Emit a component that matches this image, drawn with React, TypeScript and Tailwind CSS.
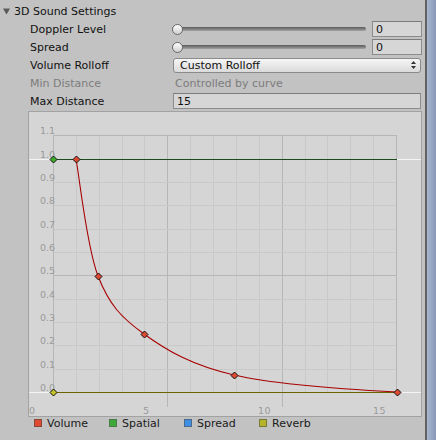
import React from "react";

const Y = (v: number) => 281 - v * 233.3;
const GX0 = 25;
const GX1 = 368;
const STEP = (GX1 - GX0) / 15;

type P = [number, number];
const pts: P[] = [
  [48, 48],
  [70, 165],
  [116, 223],
  [206, 264],
  [369, 281],
];

function catmull(p: P[]): string {
  let d = `M${p[0][0]},${p[0][1]}`;
  for (let i = 0; i < p.length - 1; i++) {
    const p0 = p[i - 1] || p[i];
    const p1 = p[i];
    const p2 = p[i + 1];
    const p3 = p[i + 2] || [p2[0] + (p2[0] - p1[0]), p2[1]];
    const c1: P = [p1[0] + (p2[0] - p0[0]) / 6, p1[1] + (p2[1] - p0[1]) / 6];
    const c2: P = [p2[0] - (p3[0] - p1[0]) / 6, p2[1] - (p3[1] - p1[1]) / 6];
    d += ` C${c1[0]},${c1[1]} ${c2[0]},${c2[1]} ${p2[0]},${p2[1]}`;
  }
  return d;
}

function Diamond({ x, y, fill }: { x: number; y: number; fill: string }) {
  const r = 3.5;
  return (
    <polygon
      points={`${x},${y - r} ${x + r},${y} ${x},${y + r} ${x - r},${y}`}
      fill={fill}
      stroke="#111"
      strokeWidth={1}
    />
  );
}

function Graph() {
  const vLines: React.ReactNode[] = [];
  for (let k = 1; k < 15; k++) {
    const x = Math.round(GX0 + k * STEP) + 0.5;
    const major = k % 5 === 0;
    vLines.push(
      <line
        key={"v" + k}
        x1={x}
        x2={x}
        y1={24.5}
        y2={major ? 296 : 281}
        stroke={major ? "#b6b6b6" : "#c9c9c9"}
        strokeWidth={1}
      />
    );
  }
  const hLines: React.ReactNode[] = [];
  for (let i = 1; i <= 9; i++) {
    const y = Math.round(Y(i / 10)) + 0.5;
    const major = i === 5;
    hLines.push(
      <line
        key={"h" + i}
        x1={GX0}
        x2={GX1}
        y1={y}
        y2={y}
        stroke={major ? "#b6b6b6" : "#c9c9c9"}
        strokeWidth={1}
      />
    );
  }
  const yLabels: React.ReactNode[] = [];
  for (let i = 0; i <= 11; i++) {
    const v = i / 10;
    yLabels.push(
      <text key={"yl" + i} x={12} y={Math.round(Y(v)) - 1} fontSize={9.5} fill="#9a9a9a">
        {v.toFixed(1)}
      </text>
    );
  }
  return (
    <svg width={392} height={304} viewBox="1 1 392 304" className="block">
      <g shapeRendering="crispEdges">
        {vLines}
        {hLines}
        <line x1={25.5} x2={25.5} y1={24.5} y2={281} stroke="#b6b6b6" />
        <line x1={368.5} x2={368.5} y1={24.5} y2={281} stroke="#b6b6b6" />
        <line x1={25} x2={369} y1={24.5} y2={24.5} stroke="#b6b6b6" />
      </g>
      <g fontFamily="'DejaVu Sans', sans-serif">
        {yLabels}
        <text x={1} y={303} fontSize={9.5} fill="#9a9a9a">0</text>
        <text x={115} y={303} fontSize={9.5} fill="#9a9a9a">5</text>
        <text x={230} y={303} fontSize={9.5} fill="#9a9a9a" letterSpacing={0.5}>10</text>
        <text x={345} y={303} fontSize={9.5} fill="#9a9a9a" letterSpacing={0.5}>15</text>
      </g>
      <g shapeRendering="crispEdges">
        <line x1={0} x2={25} y1={48.5} y2={48.5} stroke="#f4f4f4" />
        <line x1={369} x2={393} y1={48.5} y2={48.5} stroke="#f4f4f4" />
        <line x1={25} x2={369} y1={48.5} y2={48.5} stroke="#1d4a1d" />
        <line x1={0} x2={25} y1={281.5} y2={281.5} stroke="#f4f4f4" />
        <line x1={369} x2={393} y1={281.5} y2={281.5} stroke="#f4f4f4" />
        <line x1={25} x2={369} y1={281.5} y2={281.5} stroke="#6b6400" />
      </g>
      <path d={catmull(pts)} fill="none" stroke="#a80000" strokeWidth={1.1} />
      <Diamond x={25.5} y={48.5} fill="#3fae2c" />
      <Diamond x={25.5} y={281.5} fill="#c4c22a" />
      {pts.map(([x, y], i) => (
        <Diamond key={i} x={x + 0.5} y={y + 0.5} fill="#e04a32" />
      ))}
    </svg>
  );
}

function Field({ children, className = "" }: { children?: React.ReactNode; className?: string }) {
  return (
    <div
      className={
        "h-[16px] border border-[#8c8c8c] border-t-[#7c7c7c] bg-[#d6d6d6] pl-[3px] flex items-center leading-none text-[#111] " +
        className
      }
    >
      {children}
    </div>
  );
}

function Slider() {
  return (
    <div className="relative flex-1 h-[16px] flex items-center">
      <div className="h-[4px] w-full rounded-full bg-gradient-to-b from-[#5c5c5c] to-[#a2a2a2]" />
      <div className="absolute left-0 top-[3px] w-[11px] h-[11px] rounded-full border border-[#6a6a6a] bg-gradient-to-b from-[#ffffff] to-[#cfcfcf]" />
    </div>
  );
}

function LegendItem({ color, border, label }: { color: string; border: string; label: string }) {
  return (
    <div className="w-[75px] flex items-center gap-[5px]">
      <div className={"w-[8px] h-[8px] border " + color + " " + border} />
      <span className="text-[#1a1a1a]">{label}</span>
    </div>
  );
}

export default function App() {
  return (
    <div
      className="w-[436px] h-[440px] bg-[#c2c2c2] flex overflow-hidden text-[11px] text-[#111]"
      style={{ fontFamily: "'DejaVu Sans', Verdana, sans-serif" }}
    >
      <div className="w-[425px] pt-[2px] flex flex-col">
        <div className="h-[18px] flex items-center pl-[3px] leading-none">
          <svg width="8" height="7" viewBox="0 0 8 7" className="mr-[3px]">
            <polygon points="0,0.5 7,0.5 3.5,6.5" fill="#5a5a5a" />
          </svg>
          <span>3D Sound Settings</span>
        </div>
        <div className="h-[18px] flex items-center pl-[30px]">
          <div className="w-[142px] leading-none">Doppler Level</div>
          <div className="w-[250px] flex items-center gap-[6px]">
            <Slider />
            <Field className="w-[50px]">0</Field>
          </div>
        </div>
        <div className="h-[18px] flex items-center pl-[30px]">
          <div className="w-[142px] leading-none">Spread</div>
          <div className="w-[250px] flex items-center gap-[6px]">
            <Slider />
            <Field className="w-[50px]">0</Field>
          </div>
        </div>
        <div className="h-[18px] flex items-center pl-[30px]">
          <div className="w-[142px] leading-none">Volume Rolloff</div>
          <div className="ml-[1px] w-[248px] h-[15px] rounded-[3px] border border-[#8a8a8a] bg-gradient-to-b from-[#f6f6f6] to-[#dadada] flex items-center justify-between pl-[6px] pr-[4px] leading-none">
            <span>Custom Rolloff</span>
            <svg width="5" height="8" viewBox="0 0 5 8">
              <polygon points="2.5,0 5,3 0,3" fill="#333" />
              <polygon points="0,5 5,5 2.5,8" fill="#333" />
            </svg>
          </div>
        </div>
        <div className="h-[18px] flex items-center pl-[30px] text-[#7c7c7c]">
          <div className="w-[142px] leading-none">Min Distance</div>
          <div className="pl-[3px] leading-none">Controlled by curve</div>
        </div>
        <div className="h-[18px] flex items-center pl-[30px]">
          <div className="w-[142px] leading-none">Max Distance</div>
          <Field className="ml-[1px] w-[248px]">15</Field>
        </div>
        <div className="ml-[28px] mt-[1px] w-[394px] h-[306px] border border-[#a2a2a2] bg-[#d5d5d5]">
          <Graph />
        </div>
        <div className="ml-[34px] h-[12px] flex items-center leading-none">
          <LegendItem color="bg-[#e04a32]" border="border-[#8a4a3a]" label="Volume" />
          <LegendItem color="bg-[#3fa83a]" border="border-[#4a7a4a]" label="Spatial" />
          <LegendItem color="bg-[#3e8ee6]" border="border-[#4a6a8a]" label="Spread" />
          <LegendItem color="bg-[#b4b42a]" border="border-[#7a7a3a]" label="Reverb" />
        </div>
      </div>
      <div className="flex-1 border-l-2 border-[#626262] bg-gradient-to-r from-[#a9b7cf] to-[#8798b7]" />
    </div>
  );
}
